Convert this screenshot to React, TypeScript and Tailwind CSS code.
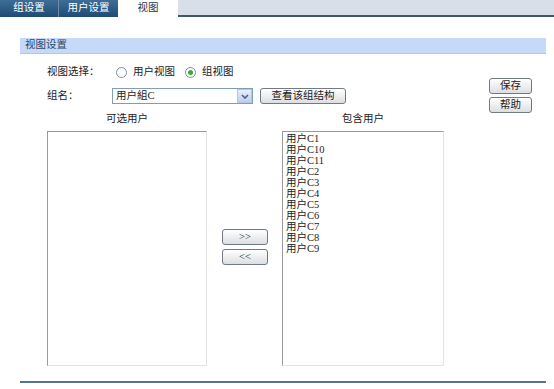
import React from 'react';

const font = { fontFamily: '"Liberation Serif", "Noto Sans CJK SC", serif' };

const users = ['C1', 'C10', 'C11', 'C2', 'C3', 'C4', 'C5', 'C6', 'C7', 'C8', 'C9'];

const Btn: React.FC<{ className?: string; children: React.ReactNode }> = ({ className, children }) => (
  <button
    className={
      'flex items-center justify-center rounded-[3px] border border-[#707a86] bg-gradient-to-b from-white to-[#dcdee2] text-[10.5px] leading-none text-[#222] ' +
      (className ?? '')
    }
  >
    {children}
  </button>
);

const Radio: React.FC<{ checked?: boolean }> = ({ checked }) => (
  <span className="flex h-[11px] w-[11px] items-center justify-center rounded-full border border-[#7d8fa3] bg-white">
    {checked ? <span className="h-[5px] w-[5px] rounded-full bg-[#3bab3b]" /> : null}
  </span>
);

const Tabs = () => (
  <div className="flex h-[17px] bg-[#d8dfe9] text-[10.5px] leading-none">
    <div className="flex w-[59px] items-center justify-center border-r border-[#6f8aa6] bg-gradient-to-b from-[#3e6d97] to-[#1f4c74] text-white">
      组设置
    </div>
    <div className="flex w-[59px] items-center justify-center bg-gradient-to-b from-[#3e6d97] to-[#1f4c74] text-white">
      用户设置
    </div>
    <div className="flex w-[60px] items-center justify-center bg-white text-[#1d3a5a]">视图</div>
    <div className="flex-1 self-end border-b-2 border-[#3f5868]" />
  </div>
);

export default function App() {
  return (
    <div className="h-[389px] w-[554px] bg-white text-[10.5px] text-[#222]" style={font}>
      <Tabs />
      <div className="pl-[20px] pr-[8px]">
        <div className="mt-[21px] flex h-[16px] items-center border-b border-[#b3c7e6] bg-[#c6d9f8] pl-[5px] leading-none text-[#2d4866]">
          视图设置
        </div>

        <div className="flex">
          <div className="w-[426px] pl-[27px]">
            <div className="mt-[11px] flex h-[14px] items-center leading-none">
              <span className="w-[69px]">视图选择：</span>
              <Radio />
              <span className="ml-[6px]">用户视图</span>
              <span className="ml-[10px]">
                <Radio checked />
              </span>
              <span className="ml-[6px]">组视图</span>
            </div>

            <div className="mt-[9px] flex h-[16px] items-center leading-none">
              <span className="w-[65px]">组名：</span>
              <div className="flex h-[16px] w-[141px] items-center border border-[#7f9db9] bg-white">
                <span className="flex-1 pl-[3px]">用户組C</span>
                <span className="flex h-[14px] w-[15px] items-center justify-center border border-[#b4c6e0] bg-gradient-to-b from-[#e8effb] to-[#bccfef]">
                  <svg width="8" height="5" viewBox="0 0 8 5">
                    <path d="M1 1 L4 4 L7 1" fill="none" stroke="#4d6185" strokeWidth="1.6" />
                  </svg>
                </span>
              </div>
              <Btn className="ml-[7px] h-[16px] w-[86px]">查看该组结构</Btn>
            </div>

            <div className="mt-[8px] flex items-start">
              <div className="flex w-[160px] flex-col items-center">
                <span className="h-[13px] leading-[13px]">可选用户</span>
                <div className="mt-[6px] h-[235px] w-[160px] border border-l-[#9a9a9a] border-t-[#9a9a9a] border-r-[#e3e3e3] border-b-[#e3e3e3]" />
              </div>
              <div className="ml-[15px] flex w-[46px] flex-col gap-[4px] pt-[117px]">
                <Btn className="h-[16px] w-[46px]">&gt;&gt;</Btn>
                <Btn className="h-[16px] w-[46px]">&lt;&lt;</Btn>
              </div>
              <div className="ml-[14px] flex w-[162px] flex-col items-center">
                <span className="h-[13px] leading-[13px]">包含用户</span>
                <div className="mt-[6px] h-[235px] w-[162px] border border-l-[#9a9a9a] border-t-[#9a9a9a] border-r-[#e3e3e3] border-b-[#e3e3e3] pl-[3px] pt-[1px]">
                  {users.map((u) => (
                    <div key={u} className="h-[11px] text-[10.5px] leading-[11px]">
                      用户{u}
                    </div>
                  ))}
                </div>
              </div>
            </div>
          </div>

          <div className="ml-[43px] flex flex-col gap-[3px] pt-[24px]">
            <Btn className="h-[16px] w-[43px]">保存</Btn>
            <Btn className="h-[16px] w-[43px]">帮助</Btn>
          </div>
        </div>

        <div className="mt-[15px] h-[2px] bg-[#58758f]" />
      </div>
    </div>
  );
}
